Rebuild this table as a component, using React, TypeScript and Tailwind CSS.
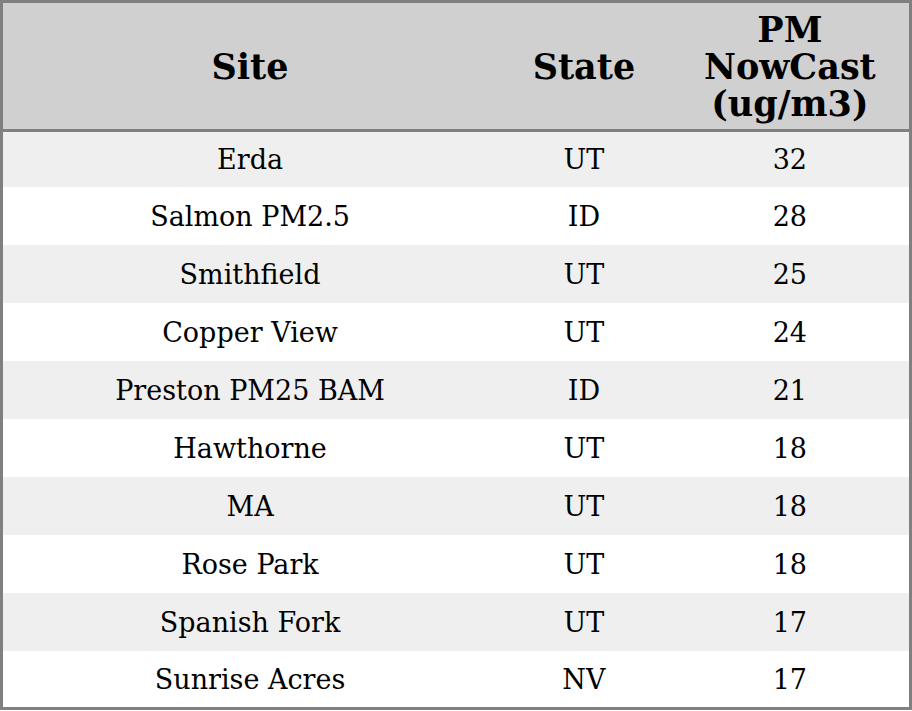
const rows: [string, string, number][] = [
  ['Erda', 'UT', 32],
  ['Salmon PM2.5', 'ID', 28],
  ['Smithfield', 'UT', 25],
  ['Copper View', 'UT', 24],
  ['Preston PM25 BAM', 'ID', 21],
  ['Hawthorne', 'UT', 18],
  ['MA', 'UT', 18],
  ['Rose Park', 'UT', 18],
  ['Spanish Fork', 'UT', 17],
  ['Sunrise Acres', 'NV', 17],
]

export default function App() {
  return (
    <div className="h-[711px] w-[912px] bg-white font-['DejaVu_Serif',serif] text-black">
      <table className="w-[912px] table-fixed border-collapse border-[3px] border-[#808080]">
        <colgroup>
          <col className="w-[494px]" />
          <col className="w-[173px]" />
          <col className="w-[239px]" />
        </colgroup>
        <thead>
          <tr className="h-[129px] border-b-[3px] border-[#808080] bg-[#d0d0d0] text-[35px] leading-[37px] font-bold">
            <th className="px-2">Site</th>
            <th className="px-2">State</th>
            <th className="px-2">PM NowCast (ug/m3)</th>
          </tr>
        </thead>
        <tbody className="text-[27px] leading-[30px]">
          {rows.map(([site, state, pm], i) => {
            const cell = `px-2 text-center ${i === 0 ? 'pt-[1px]' : 'pt-[3px]'}`
            return (
              <tr
                key={site}
                className={`${i % 2 === 0 ? 'bg-[#efefef]' : 'bg-white'} ${i === 0 ? 'h-[56px]' : 'h-[58px]'}`}
              >
                <td className={cell}>{site}</td>
                <td className={cell}>{state}</td>
                <td className={cell}>{pm}</td>
              </tr>
            )
          })}
        </tbody>
      </table>
    </div>
  )
}
